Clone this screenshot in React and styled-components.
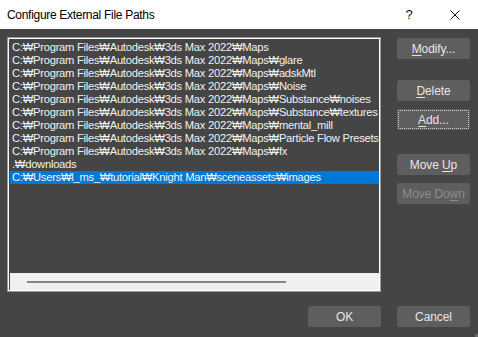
import React from "react";
import styled, { createGlobalStyle } from "styled-components";

const Global = createGlobalStyle`
  html, body { margin: 0; padding: 0; background: #454545; }
  body { font-family: "Liberation Sans", Arial, sans-serif; font-size: 12px; }
  #root { width: 478px; height: 337px; overflow: hidden; }
`;

const Dialog = styled.div`
  width: 478px;
  height: 337px;
  display: flex;
  flex-direction: column;
  background: #454545;
  position: relative;
`;

const TitleBar = styled.div`
  height: 29px;
  background: #ffffff;
  display: flex;
  align-items: center;
  padding-left: 7px;
  box-sizing: border-box;
  color: #000;
  font-size: 12px;
  letter-spacing: -0.3px;
`;

const Title = styled.div`
  flex: 1;
`;

const TitleBtn = styled.div`
  width: 46px;
  height: 29px;
  display: flex;
  align-items: center;
  justify-content: center;
  font-size: 13px;
  color: #111;
`;

const Body = styled.div`
  flex: 1;
  display: flex;
  flex-direction: column;
  padding: 8px 8px 0 7px;
`;

const Main = styled.div`
  display: flex;
  gap: 16px;
`;

const ListBox = styled.div`
  width: 374px;
  height: 255px;
  box-sizing: border-box;
  border: 1px solid #9a9a9a;
  box-shadow: inset 0 0 0 1px #ffffff;
  padding: 2px 1px 1px 2px;
  display: flex;
  flex-direction: column;
`;

const Rows = styled.div`
  flex: 1;
  padding-top: 1px;
  overflow: hidden;
`;

const Row = styled.div`
  height: 13px;
  line-height: 13px;
  padding-left: 2px;
  color: #f2f2f2;
  white-space: nowrap;
  font-size: 11.2px;
  letter-spacing: -0.25px;
  background: ${(p) => (p.$selected ? "#0078d7" : "transparent")};
`;

const HScroll = styled.div`
  height: 17px;
  background: #f0f0f0;
  display: flex;
  align-items: center;
  padding-left: 17px;
`;

const Thumb = styled.div`
  width: 259px;
  height: 2px;
  background: #858585;
`;

const Column = styled.div`
  display: flex;
  flex-direction: column;
  padding-top: 1px;
`;

const Button = styled.div`
  width: 73px;
  height: 21px;
  box-sizing: border-box;
  margin-top: ${(p) => p.$mt || 0}px;
  background: #5e5e5e;
  border-radius: 2px;
  display: flex;
  align-items: center;
  justify-content: center;
  color: ${(p) => (p.$disabled ? "#8c8c8c" : "#e6e6e6")};
  font-size: 12px;
  letter-spacing: -0.1px;
  outline: ${(p) => (p.$focus ? "1px dotted #d0d0d0" : "none")};
  outline-offset: -2px;
  u { text-decoration: underline; text-underline-offset: 2px; }
`;

const Footer = styled.div`
  display: flex;
  justify-content: flex-end;
  gap: 16px;
  margin-top: 14px;
`;

const Grip = styled.div`
  position: absolute;
  right: 0;
  bottom: 0;
  width: 3px;
  height: 3px;
  background: #6a6a6a;
`;

const W = "\u20A9";
const base = `C:${W}Program Files${W}Autodesk${W}3ds Max 2022${W}Maps`;
const items = [
  base,
  `${base}${W}glare`,
  `${base}${W}adskMtl`,
  `${base}${W}Noise`,
  `${base}${W}Substance${W}noises`,
  `${base}${W}Substance${W}textures`,
  `${base}${W}mental_mill`,
  `${base}${W}Particle Flow Presets`,
  `${base}${W}fx`,
  `.${W}downloads`,
];
const selected = `C:${W}Users${W}l_ms_${W}tutorial${W}Knight Man${W}sceneassets${W}images`;

export default function App() {
  return (
    <>
      <Global />
      <Dialog>
        <TitleBar>
          <Title>Configure External File Paths</Title>
          <TitleBtn>?</TitleBtn>
          <TitleBtn>
            <svg width="10" height="10" viewBox="0 0 10 10">
              <path d="M0.5 0.5 L9.5 9.5 M9.5 0.5 L0.5 9.5" stroke="#111" strokeWidth="1" />
            </svg>
          </TitleBtn>
        </TitleBar>
        <Body>
          <Main>
            <ListBox>
              <Rows>
                {items.map((t, i) => (
                  <Row key={i}>{t}</Row>
                ))}
                <Row $selected>{selected}</Row>
              </Rows>
              <HScroll>
                <Thumb />
              </HScroll>
            </ListBox>
            <Column>
              <Button><span><u>M</u>odify...</span></Button>
              <Button $mt={21}><span><u>D</u>elete</span></Button>
              <Button $mt={8} $focus><span><u>A</u>dd...</span></Button>
              <Button $mt={24}><span>Move <u>U</u>p</span></Button>
              <Button $mt={8} $disabled><span>Move Do<u>w</u>n</span></Button>
            </Column>
          </Main>
          <Footer>
            <Button>OK</Button>
            <Button>Cancel</Button>
          </Footer>
        </Body>
        <Grip />
      </Dialog>
    </>
  );
}
